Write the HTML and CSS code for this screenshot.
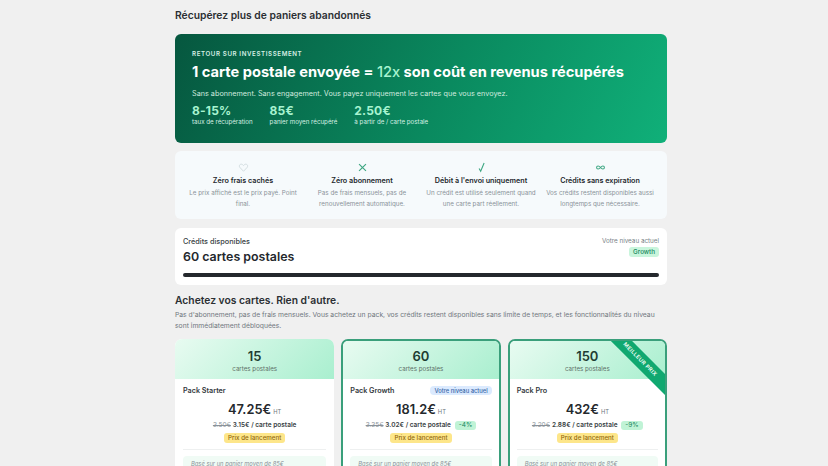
FILE: index.html
```html
<!DOCTYPE html>
<html lang="fr">
<head>
  <meta charset="UTF-8">
  <title>Récupérez plus de paniers abandonnés</title>
  <link rel="stylesheet" href="styles.css">
</head>
<body>
  <main class="page">
    <h1 class="page-title">Récupérez plus de paniers abandonnés</h1>

    <section class="roi">
      <div class="roi-label">RETOUR SUR INVESTISSEMENT</div>
      <h2 class="roi-title">1 carte postale envoyée = <span class="roi-accent">12x</span> son coût en revenus récupérés</h2>
      <p class="roi-text">Sans abonnement. Sans engagement. Vous payez uniquement les cartes que vous envoyez.</p>
      <div class="roi-stats">
        <div><div class="stat-value">8-15%</div><div class="stat-label">taux de récupération</div></div>
        <div><div class="stat-value">85€</div><div class="stat-label">panier moyen récupéré</div></div>
        <div><div class="stat-value">2.50€</div><div class="stat-label">à partir de / carte postale</div></div>
      </div>
    </section>

    <section class="features">
      <div class="feature">
        <svg class="feature-icon" viewBox="0 0 16 16"><path d="M8 13.500 3 8.200C1.800 7 1.600 5.300 2.600 4.100 3.700 2.900 5.600 2.800 6.800 4L8 5.200 9.200 4c1.200-1.200 3.100-1.100 4.200.1 1 1.200.8 2.900-.4 4.100z" fill="none" stroke="#cfdadd" stroke-width="1.300"/></svg>
        <h3>Zéro frais cachés</h3>
        <p>Le prix affiché est le prix payé. Point final.</p>
      </div>
      <div class="feature">
        <svg class="feature-icon" viewBox="0 0 16 16"><path d="M3 3 13 13M13 3 3 13" fill="none" stroke="#3fa783" stroke-width="1.700"/></svg>
        <h3>Zéro abonnement</h3>
        <p>Pas de frais mensuels, pas de renouvellement automatique.</p>
      </div>
      <div class="feature">
        <svg class="feature-icon" viewBox="0 0 16 16"><path d="M4.500 9.500 6.800 13.500 11.800 1.500" fill="none" stroke="#3fa783" stroke-width="1.600"/></svg>
        <h3>Débit à l'envoi uniquement</h3>
        <p>Un crédit est utilisé seulement quand une carte part réellement.</p>
      </div>
      <div class="feature">
        <svg class="feature-icon" viewBox="0 0 16 16"><path d="M8 8C6.800 6.400 5.800 5.800 4.500 5.800a2.200 2.200 0 0 0 0 4.400C5.800 10.200 6.800 9.600 8 8c1.200-1.600 2.200-2.200 3.500-2.200a2.200 2.200 0 0 1 0 4.400C10.200 10.200 9.200 9.600 8 8z" fill="none" stroke="#3fa783" stroke-width="1.500"/></svg>
        <h3>Crédits sans expiration</h3>
        <p>Vos crédits restent disponibles aussi longtemps que nécessaire.</p>
      </div>
    </section>

    <section class="credits">
      <div class="credits-top">
        <div>
          <div class="credits-label">Crédits disponibles</div>
          <div class="credits-value">60 cartes postales</div>
        </div>
        <div class="credits-level">
          <div>Votre niveau actuel</div>
          <span class="level-badge">Growth</span>
        </div>
      </div>
      <div class="credits-bar"></div>
    </section>

    <h2 class="buy-title">Achetez vos cartes. Rien d'autre.</h2>
    <p class="buy-text">Pas d'abonnement, pas de frais mensuels. Vous achetez un pack, vos crédits restent disponibles sans limite de temps, et les fonctionnalités du niveau sont immédiatement débloquées.</p>

    <section class="packs">
      <article class="pack">
        <header class="pack-head">
          <div class="pack-qty">15</div>
          <div class="pack-unit">cartes postales</div>
        </header>
        <div class="pack-body">
          <div class="pack-name-row"><span class="pack-name">Pack Starter</span></div>
          <div class="pack-price"><span>47.25€</span> <small>HT</small></div>
          <div class="pack-per"><s>3.50€</s> <b>3.15€ / carte postale</b></div>
          <div class="pack-promo"><span>Prix de lancement</span></div>
          <div class="pack-note">Basé sur un panier moyen de 85€</div>
        </div>
      </article>

      <article class="pack pack-active">
        <header class="pack-head">
          <div class="pack-qty">60</div>
          <div class="pack-unit">cartes postales</div>
        </header>
        <div class="pack-body">
          <div class="pack-name-row"><span class="pack-name">Pack Growth</span><span class="current-tag">Votre niveau actuel</span></div>
          <div class="pack-price"><span>181.2€</span> <small>HT</small></div>
          <div class="pack-per"><s>3.35€</s> <b>3.02€ / carte postale</b> <span class="discount">-4%</span></div>
          <div class="pack-promo"><span>Prix de lancement</span></div>
          <div class="pack-note">Basé sur un panier moyen de 85€</div>
        </div>
      </article>

      <article class="pack pack-active">
        <div class="ribbon">MEILLEUR PRIX</div>
        <header class="pack-head">
          <div class="pack-qty">150</div>
          <div class="pack-unit">cartes postales</div>
        </header>
        <div class="pack-body">
          <div class="pack-name-row"><span class="pack-name">Pack Pro</span></div>
          <div class="pack-price"><span>432€</span> <small>HT</small></div>
          <div class="pack-per"><s>3.20€</s> <b>2.88€ / carte postale</b> <span class="discount">-9%</span></div>
          <div class="pack-promo"><span>Prix de lancement</span></div>
          <div class="pack-note">Basé sur un panier moyen de 85€</div>
        </div>
      </article>
    </section>
  </main>
</body>
</html>
```

FILE: styles.css
```css
html, body {
  height: 466px;
  overflow: hidden;
}

body {
  margin: 0;
  background: #f0f0f0;
  font-family: Inter, sans-serif;
  color: #1f2328;
}

.page {
  width: 492px;
  margin-left: 175px;
  padding-top: 9px;
}

.page-title {
  margin: 0 0 13px;
  font-size: 10.300px;
  line-height: 12px;
  font-weight: 600;
  color: #2b2f33;
}

.roi {
  height: 109px;
  box-sizing: border-box;
  padding: 16px 17px 0;
  border-radius: 6px;
  background: linear-gradient(115deg, #06573f 0%, #0a8a5f 55%, #10b079 100%);
  color: #fff;
}

.roi-label {
  font-size: 6.200px;
  line-height: 8px;
  font-weight: 600;
  letter-spacing: .6px;
  color: #d6efe4;
}

.roi-title {
  margin: 4px 0 7px;
  font-size: 14.650px;
  line-height: 20px;
  font-weight: 700;
}

.roi-accent {
  color: #a7f3d0;
  font-weight: 500;
}

.roi-text {
  margin: 0 0 4px;
  font-size: 7.250px;
  line-height: 10px;
  color: #cfeadf;
}

.roi-stats {
  display: flex;
  gap: 17px;
  padding-top: 1px;
}

.stat-value {
  font-size: 12px;
  line-height: 14px;
  font-weight: 700;
  letter-spacing: .2px;
  color: #a7f3d0;
}

.stat-label {
  font-size: 6.200px;
  line-height: 7px;
  color: #d6efe4;
}

.features {
  margin-top: 8px;
  height: 68px;
  box-sizing: border-box;
  display: grid;
  grid-template-columns: repeat(4, 112px);
  gap: 7px;
  padding: 11px 12px 0;
  border-radius: 6px;
  background: #f6fafc;
  text-align: center;
}

.feature-icon {
  display: block;
  width: 11px;
  height: 11px;
  margin: 0 auto 3px;
}

.feature h3 {
  margin: 0 0 3px;
  font-size: 7.200px;
  line-height: 9px;
  font-weight: 600;
  color: #24282d;
}

.feature p {
  margin: 0;
  font-size: 6.250px;
  line-height: 10.500px;
  color: #8a9299;
}

.credits {
  margin-top: 9px;
  height: 57px;
  box-sizing: border-box;
  padding: 9px 8px 0;
  border-radius: 6px;
  background: #fff;
}

.credits-top {
  display: flex;
  justify-content: space-between;
}

.credits-label {
  font-size: 7.300px;
  line-height: 9px;
  font-weight: 500;
  color: #3a3f45;
}

.credits-value {
  margin-top: 2px;
  font-size: 12.400px;
  line-height: 18px;
  font-weight: 600;
  color: #24282d;
}

.credits-level {
  text-align: right;
  font-size: 6.300px;
  line-height: 8px;
  color: #777f86;
}

.level-badge {
  display: inline-block;
  margin-top: 2px;
  padding: 1px 4px;
  border-radius: 3px;
  background: #c9f5dc;
  color: #16865c;
  font-weight: 500;
}

.credits-bar {
  margin-top: 7px;
  height: 4px;
  border-radius: 2px;
  background: #24282d;
}

.buy-title {
  margin: 8px 0 0;
  font-size: 10.300px;
  line-height: 14px;
  font-weight: 600;
  color: #2b2f33;
}

.buy-text {
  margin: 3px 0 0;
  font-size: 6.780px;
  line-height: 10.500px;
  color: #6f767d;
}

.packs {
  margin-top: 8px;
  display: grid;
  grid-template-columns: repeat(3, 1fr);
  gap: 7px;
}

.pack {
  position: relative;
  overflow: hidden;
  height: 200px;
  box-sizing: border-box;
  border-radius: 7px;
  background: #fff;
}

.pack-active {
  border: 2px solid #3a9f7b;
}

.pack-head {
  height: 40px;
  box-sizing: border-box;
  padding-top: 10px;
  text-align: center;
  background: linear-gradient(135deg, #e8fbf1 0%, #a9efcf 100%);
}

.pack-active .pack-head {
  height: 38px;
  padding-top: 8px;
}

.pack-qty {
  font-size: 13px;
  line-height: 14px;
  font-weight: 600;
  color: #1f3d33;
}

.pack-unit {
  margin-top: 2px;
  font-size: 6.200px;
  line-height: 8px;
  color: #5d7068;
}

.pack-body {
  padding: 5px 8px 0;
  text-align: center;
}

.pack-active .pack-body {
  padding: 5px 7px 0;
}

.pack-name-row {
  display: flex;
  justify-content: space-between;
  align-items: center;
  height: 12px;
}

.pack-name {
  font-size: 7.200px;
  font-weight: 600;
  color: #33383d;
}

.current-tag {
  padding: 1px 4px;
  border-radius: 4px;
  background: #dbeafe;
  color: #3867a8;
  font-size: 5.800px;
  line-height: 7px;
  font-weight: 500;
}

.pack-price {
  display: flex;
  justify-content: center;
  align-items: baseline;
  gap: 2px;
  margin-top: 6px;
  font-size: 12.800px;
  line-height: 16px;
  font-weight: 600;
  color: #24282d;
}

.pack-price small {
  font-size: 5.800px;
  font-weight: 400;
  color: #6f767d;
}

.pack-per {
  margin-top: 1px;
  font-size: 6.500px;
  line-height: 9px;
  color: #8a9299;
}

.pack-per b {
  font-weight: 600;
  color: #3a3f45;
}

.discount {
  display: inline-block;
  margin-left: 2px;
  padding: 0 4px;
  border-radius: 3px;
  background: #c0f3d6;
  color: #16865c;
}

.pack-promo {
  display: flex;
  justify-content: center;
  margin-top: 3px;
  padding-bottom: 6px;
  border-bottom: 1px solid #eef0f0;
}

.pack-promo span {
  padding: 0 4px;
  border-radius: 3px;
  background: #fde68a;
  color: #92680e;
  font-size: 6.200px;
  line-height: 10px;
  font-weight: 500;
}

.pack-note {
  margin-top: 6px;
  padding: 4px 8px 12px;
  border-radius: 4px;
  background: #f0fbf5;
  color: #8a9299;
  font-size: 5.800px;
  line-height: 7px;
  font-style: italic;
  text-align: left;
}

.ribbon {
  position: absolute;
  top: 11px;
  right: -45px;
  width: 140px;
  height: 15px;
  transform: rotate(45deg);
  background: #10a870;
  color: #e8fbf1;
  font-size: 5.500px;
  line-height: 15px;
  font-weight: 700;
  letter-spacing: .3px;
  text-align: center;
}
```
